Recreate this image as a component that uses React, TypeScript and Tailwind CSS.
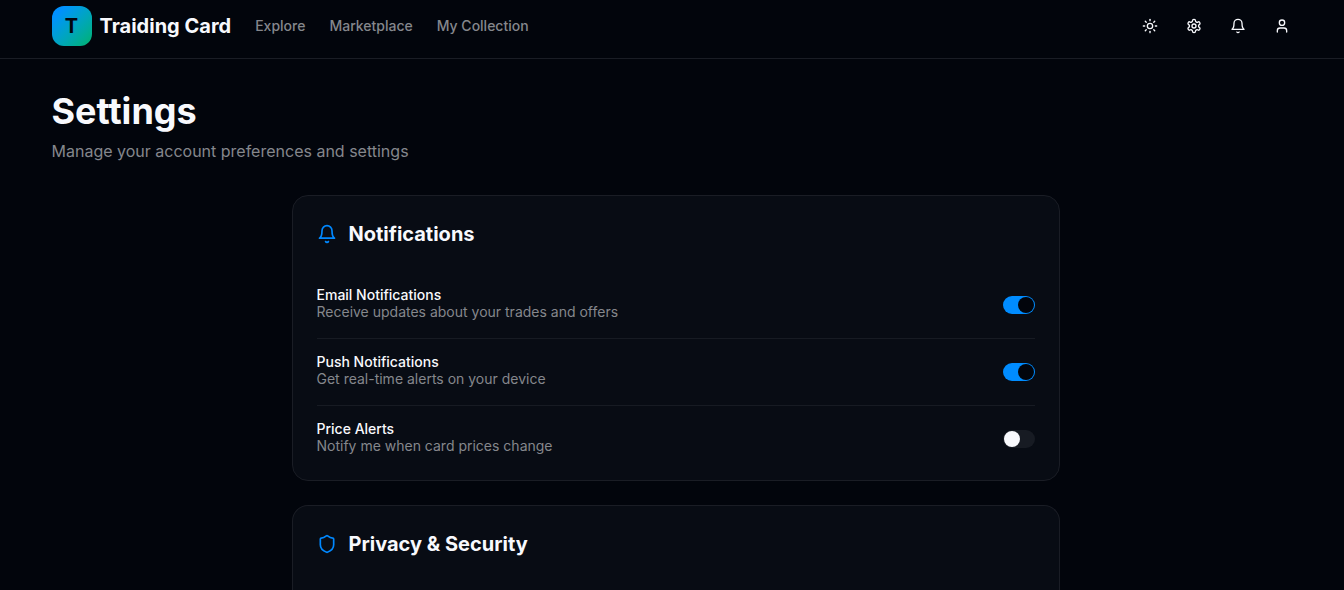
import React, { useState } from 'react';
import { createLucideIcon, Shield, Sun, User, type LucideIcon } from 'lucide-react';

const BellIcon = createLucideIcon('bell-classic', [
  ['path', { d: 'M6 8a6 6 0 0 1 12 0c0 7 3 9 3 9H3s3-2 3-9', key: 'body' }],
  ['path', { d: 'M10.3 21a1.94 1.94 0 0 0 3.4 0', key: 'clapper' }],
]);

const GearIcon = createLucideIcon('gear-classic', [
  [
    'path',
    {
      d: 'M12.22 2h-.44a2 2 0 0 0-2 2v.18a2 2 0 0 1-1 1.73l-.43.25a2 2 0 0 1-2 0l-.15-.08a2 2 0 0 0-2.73.73l-.22.38a2 2 0 0 0 .73 2.73l.15.1a2 2 0 0 1 1 1.72v.51a2 2 0 0 1-1 1.74l-.15.09a2 2 0 0 0-.73 2.73l.22.38a2 2 0 0 0 2.73.73l.15-.08a2 2 0 0 1 2 0l.43.25a2 2 0 0 1 1 1.73V20a2 2 0 0 0 2 2h.44a2 2 0 0 0 2-2v-.18a2 2 0 0 1 1-1.73l.43-.25a2 2 0 0 1 2 0l.15.08a2 2 0 0 0 2.73-.73l.22-.39a2 2 0 0 0-.73-2.73l-.15-.08a2 2 0 0 1-1-1.74v-.5a2 2 0 0 1 1-1.74l.15-.09a2 2 0 0 0 .73-2.73l-.22-.38a2 2 0 0 0-2.73-.73l-.15.08a2 2 0 0 1-2 0l-.43-.25a2 2 0 0 1-1-1.73V4a2 2 0 0 0-2-2z',
      key: 'rim',
    },
  ],
  ['circle', { cx: '12', cy: '12', r: '3', key: 'hub' }],
]);

const NAV_LINKS = ['Explore', 'Marketplace', 'My Collection'];

const ACTIONS: { label: string; icon: LucideIcon }[] = [
  { label: 'Toggle theme', icon: Sun },
  { label: 'Settings', icon: GearIcon },
  { label: 'Notifications', icon: BellIcon },
  { label: 'Profile', icon: User },
];

const NOTIFICATION_OPTIONS = [
  { id: 'email', title: 'Email Notifications', description: 'Receive updates about your trades and offers', enabled: true },
  { id: 'push', title: 'Push Notifications', description: 'Get real-time alerts on your device', enabled: true },
  { id: 'price', title: 'Price Alerts', description: 'Notify me when card prices change', enabled: false },
];

function Header() {
  return (
    <header className="border-b border-[#1a1d25] pl-[7px]">
      <div className="mx-auto flex w-full max-w-7xl items-center justify-between px-4 pt-1.5 pb-3">
        <div className="flex items-center gap-6">
          <a href="#" className="flex items-center gap-2">
            <span className="flex size-10 items-center justify-center rounded-xl bg-linear-to-br from-[#0090ff] from-15% to-[#00b26a] text-xl font-bold text-[#02050c]">
              T
            </span>
            <span className="text-xl font-bold">Traiding Card</span>
          </a>
          <nav className="flex items-center gap-6">
            {NAV_LINKS.map(link => (
              <a key={link} href="#" className="text-sm font-medium text-[#85878c] hover:text-[#f8f9fd]">
                {link}
              </a>
            ))}
          </nav>
        </div>
        <div className="flex items-center gap-2">
          {ACTIONS.map(({ label, icon: Icon }) => (
            <button key={label} type="button" aria-label={label} className="flex size-9 items-center justify-center rounded-md hover:bg-[#14181f]">
              <Icon className="size-4" />
            </button>
          ))}
        </div>
      </div>
    </header>
  );
}

function CardTitle({ icon: Icon, children }: { icon: LucideIcon; children: React.ReactNode }) {
  return (
    <h2 className="flex items-center gap-3 text-xl font-bold">
      <Icon className="size-5 text-[#0088ff]" />
      {children}
    </h2>
  );
}

function ToggleRow({ id, title, description, enabled }: (typeof NOTIFICATION_OPTIONS)[number]) {
  const [checked, setChecked] = useState(enabled);

  return (
    <div className="flex items-center justify-between border-b border-[#171b23] py-4 last:border-b-0 last:pb-0">
      <div>
        <label htmlFor={id} className="block text-sm leading-none font-medium">{title}</label>
        <p className="text-sm text-[#85878c]">{description}</p>
      </div>
      <input
        id={id}
        type="checkbox"
        role="switch"
        checked={checked}
        onChange={e => setChecked(e.target.checked)}
        className="flex h-[18px] w-8 shrink-0 cursor-pointer appearance-none items-center rounded-full bg-[#171b23] px-px before:size-4 before:rounded-full before:bg-[#f8f9fd] before:transition-transform checked:bg-[#008cff] checked:before:translate-x-3.5 checked:before:bg-[#02050c]"
      />
    </div>
  );
}

export default function App() {
  return (
    <div className="flex min-h-screen flex-col bg-[#02050c] font-['Inter',sans-serif] text-[#f8f9fd]">
      <Header />
      <main className="flex grow flex-col pl-[7px]">
        <div className="mx-auto flex w-full max-w-7xl grow flex-col px-4 pt-8">
          <h1 className="text-4xl font-bold">Settings</h1>
          <p className="mt-2 text-[#85878c]">Manage your account preferences and settings</p>

          <div className="mx-auto mt-8 flex w-full max-w-3xl grow flex-col gap-6">
            <section className="rounded-2xl border border-[#1a1d25] bg-[#080c14] p-6">
              <CardTitle icon={BellIcon}>Notifications</CardTitle>
              <div className="mt-6">
                {NOTIFICATION_OPTIONS.map(option => (
                  <ToggleRow key={option.id} {...option} />
                ))}
              </div>
            </section>

            <section className="grow rounded-t-2xl border border-b-0 border-[#1a1d25] bg-[#080c14] p-6">
              <CardTitle icon={Shield}>Privacy &amp; Security</CardTitle>
            </section>
          </div>
        </div>
      </main>
    </div>
  );
}
